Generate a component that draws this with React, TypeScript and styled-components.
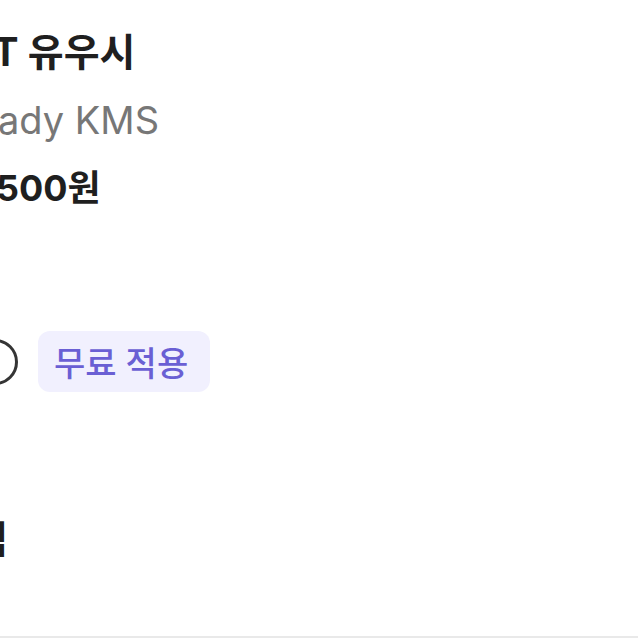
import styled, { createGlobalStyle } from "styled-components";

const GlobalStyle = createGlobalStyle`
  body {
    margin: 0;
    background: #ffffff;
    font-family: "Inter", "Noto Sans CJK KR", sans-serif;
  }
`;

const Page = styled.div`
  width: 638px;
  height: 638px;
  overflow: hidden;
  background: #ffffff;
  display: flex;
  flex-direction: column;
`;

const Content = styled.div`
  margin-left: -54px;
  padding-top: 18px;
  flex: 1;
  display: flex;
  flex-direction: column;
`;

const Title = styled.h1`
  margin: 0 0 0 -12px;
  font-size: 39px;
  line-height: 68px;
  font-weight: 700;
  color: #1f1f1f;
  white-space: nowrap;
`;

const Artist = styled.div`
  margin-left: -7px;
  font-size: 38px;
  line-height: 68px;
  color: #777777;
  white-space: nowrap;
`;

const Price = styled.div`
  font-size: 36px;
  line-height: 68px;
  font-weight: 700;
  color: #1f1f1f;
  white-space: nowrap;
`;

const OptionRow = styled.div`
  margin-top: 109px;
  display: flex;
  align-items: center;
  gap: 20px;
`;

const Radio = styled.span`
  margin-left: 26px;
  width: 40px;
  height: 40px;
  border: 3px solid #353535;
  border-radius: 50%;
  flex-shrink: 0;
`;

const Badge = styled.span`
  height: 61px;
  padding: 0 22px 0 16px;
  display: inline-flex;
  align-items: center;
  background: #f1f0fe;
  border-radius: 12px;
  color: #6a5fd4;
  font-size: 34px;
  font-weight: 500;
  white-space: nowrap;
`;

const SectionTitle = styled.h2`
  margin: 117px 0 0 -8px;
  font-size: 38px;
  line-height: 60px;
  font-weight: 700;
  color: #1f1f1f;
  white-space: nowrap;
`;

const Footer = styled.div`
  height: 0;
  border-top: 2px solid #e9e9e9;
`;

export default function App() {
  return (
    <Page>
      <GlobalStyle />
      <Content>
        <Title>NCT 유우시</Title>
        <Artist>Steady KMS</Artist>
        <Price>18,500원</Price>
        <OptionRow>
          <Radio />
          <Badge>무료 적용</Badge>
        </OptionRow>
        <SectionTitle>앨범</SectionTitle>
      </Content>
      <Footer />
    </Page>
  );
}
